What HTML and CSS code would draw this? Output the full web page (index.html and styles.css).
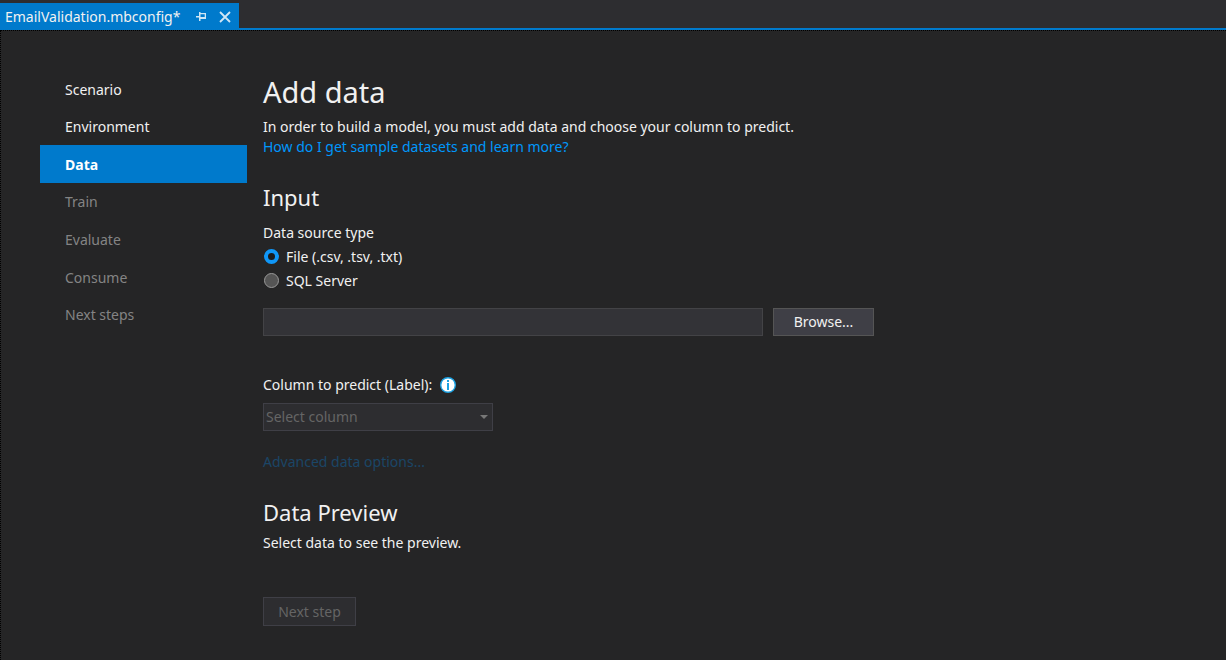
FILE: index.html
```html
<!DOCTYPE html>
<html lang="en">
<head>
<meta charset="utf-8">
<title>EmailValidation.mbconfig</title>
<link rel="stylesheet" href="styles.css">
</head>
<body>
<header class="tabs">
  <div class="tab">
    <span class="tab-name">EmailValidation.mbconfig*</span>
    <button class="tab-button" aria-label="Pin tab">
      <svg width="12" height="12" viewBox="0 0 12 12" fill="currentColor"><path d="M1 5h3v1.500H1zM4 1h1.500v9H4zM5 2h6v1.300H5zM9.700 2H11v6H9.700zM5 6h6v2H5z"/></svg>
    </button>
    <button class="tab-button" aria-label="Close tab">
      <svg width="12" height="12" viewBox="0 0 12 12" fill="none" stroke="currentColor" stroke-width="1.800"><path d="M1 1l10 10M11 1L1 11"/></svg>
    </button>
  </div>
</header>
<div class="page">
  <nav class="steps">
    <a class="step" href="#scenario">Scenario</a>
    <a class="step" href="#environment">Environment</a>
    <a class="step current" href="#data" aria-current="step">Data</a>
    <a class="step locked" href="#train">Train</a>
    <a class="step locked" href="#evaluate">Evaluate</a>
    <a class="step locked" href="#consume">Consume</a>
    <a class="step locked" href="#next">Next steps</a>
  </nav>
  <main class="content">
    <h1 class="title">Add data</h1>
    <p class="text">In order to build a model, you must add data and choose your column to predict.</p>
    <p class="text"><a class="link" href="#learn">How do I get sample datasets and learn more?</a></p>

    <h2 class="heading input-heading">Input</h2>
    <fieldset class="sources">
      <legend class="legend">Data source type</legend>
      <label class="choice"><input class="radio" type="radio" name="source" checked>File (.csv, .tsv, .txt)</label>
      <label class="choice"><input class="radio" type="radio" name="source">SQL Server</label>
    </fieldset>
    <div class="file-row">
      <input class="path" type="text" aria-label="File path">
      <button class="button browse">Browse...</button>
    </div>

    <div class="label-row">
      <label for="column">Column to predict (Label):</label>
      <svg class="info" width="16" height="16" viewBox="0 0 16 16" role="img" aria-label="Information"><circle cx="8" cy="8" r="7.300" fill="#fff" stroke="#1ba1e2" stroke-width="1.400"/><path d="M7 3h2v2H7zM7 6h2v7H7z" fill="#1ba1e2"/></svg>
    </div>
    <div class="select-box">
      <select class="select" id="column" disabled><option>Select column</option></select>
      <svg class="arrow" width="8" height="4" viewBox="0 0 8 4"><path d="M0 0h8L4 4z" fill="#777"/></svg>
    </div>
    <p class="text"><a class="link advanced" href="#advanced" aria-disabled="true">Advanced data options...</a></p>

    <h2 class="heading preview-heading">Data Preview</h2>
    <p class="text">Select data to see the preview.</p>
    <button class="button next" disabled>Next step</button>
  </main>
</div>
</body>
</html>
```
FILE: styles.css
```css
* { box-sizing: border-box; }
body {
  margin: 0;
  min-height: 100vh;
  display: flex;
  flex-direction: column;
  background: #252526;
  color: #f1f1f1;
  font: 14px/20px "Noto Sans", "Open Sans", sans-serif;
}
button, input, select { font: inherit; color: inherit; }
h1, h2, p { margin: 0; font-weight: 400; }

.tabs {
  display: flex;
  padding-top: 3px;
  background: #2d2d30;
  border-bottom: 2px solid #007acc;
}
.tab {
  display: flex;
  align-items: center;
  height: 25px;
  padding: 2px 8px 0 5px;
  background: #007acc;
}
.tab-name { margin-right: 15px; }
.tab-button {
  display: flex;
  padding: 0;
  border: 0;
  background: none;
  color: #d0e6f5;
}
.tab-button + .tab-button { margin-left: 12px; }

.page {
  flex: 1;
  display: flex;
  gap: 16px;
  padding: 39px 40px 32px 39px;
  border-top: 1px dotted #000;
  border-left: 1px dotted #000;
}
.steps {
  flex: none;
  display: grid;
  grid-auto-rows: 1fr;
  width: 207px;
  height: 263px;
}
.step {
  display: flex;
  align-items: center;
  padding: 2px 25px 0;
  color: #f1f1f1;
  text-decoration: none;
}
.current { background: #007acc; color: #fff; font-weight: 700; }
.locked { color: #848484; }

.content { flex: 1; }
.title { padding-top: 4px; font-size: 29px; line-height: 36px; margin-bottom: 7px; }
.heading { font-size: 22px; line-height: 30px; }
.link { color: #0097fb; text-decoration: none; }
.input-heading { margin-top: 25px; }
.sources { margin: 11px 0 0; padding: 0; border: 0; }
.legend { padding: 0; margin-bottom: 2px; }
.choice { display: flex; align-items: center; gap: 7px; height: 24px; }
.radio {
  appearance: none;
  width: 15px;
  height: 15px;
  margin: 0 0 2px 1px;
  border: 1px solid #999;
  border-radius: 50%;
  background: #555;
}
.radio:checked { border: 4px solid #1097f7; background: #1b1b1c; }
.file-row { display: flex; gap: 10px; margin-top: 15px; }
.path {
  width: 500px;
  height: 28px;
  padding: 0 4px;
  border: 1px solid #434346;
  background: #333337;
}
.button { height: 28px; padding: 0; border: 1px solid #555; background: #3f3f46; }
.browse { width: 101px; }
.label-row { display: flex; align-items: center; gap: 8px; margin-top: 39px; }
.select-box { display: grid; align-items: center; width: 230px; margin: 8px 0 21px; }
.select, .arrow { grid-area: 1 / 1; }
.select {
  appearance: none;
  height: 28px;
  padding: 0 2px;
  border: 1px solid #3f3f46;
  background: #2d2d30;
  color: #656565;
  opacity: 1;
}
.arrow { justify-self: end; margin-right: 5px; }
.advanced { color: #1b4667; }
.preview-heading { margin: 25px 0 6px; }
.next {
  display: block;
  width: 93px;
  height: 29px;
  margin-top: 44px;
  border-color: #3f3f46;
  background: #2d2d30;
  color: #656565;
}
```
